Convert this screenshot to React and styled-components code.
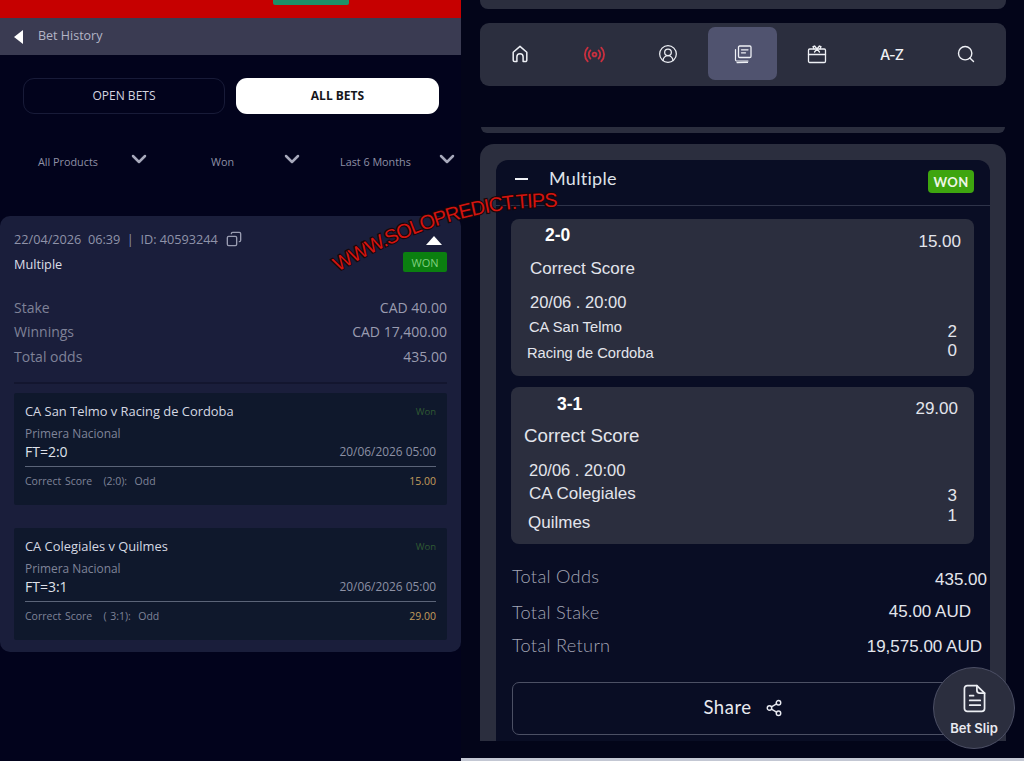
import React from "react";
import styled, { createGlobalStyle } from "styled-components";
import { ChevronDown, Copy, Radio, CircleUserRound, Search, Share2 } from "lucide-react";

const Global = createGlobalStyle`
  html, body { margin: 0; padding: 0; background: #02031a; }
  * { box-sizing: border-box; }
`;

const Page = styled.div`
  position: relative;
  width: 1024px;
  height: 761px;
  overflow: hidden;
  display: flex;
  background: #030519;
`;

/* ---------- left pane ---------- */
const LeftPane = styled.section`
  width: 461px;
  flex: none;
  height: 100%;
  background: #02031c;
  font-family: "Open Sans", sans-serif;
`;
const RedBar = styled.div`
  height: 18px;
  background: #c60000;
  display: flex;
  align-items: flex-start;
  padding-left: 273px;
`;
const GreenTab = styled.div`
  width: 76px;
  height: 5px;
  background: #1d9068;
  border-radius: 0 0 2px 2px;
`;
const HistoryBar = styled.header`
  height: 37px;
  background: #3a3b52;
  display: flex;
  align-items: center;
  gap: 15px;
  padding: 0 0 2px 14px;
  color: #b3b5c6;
  font-size: 12.5px;
`;
const BackArrow = styled.span`
  width: 0;
  height: 0;
  border-style: solid;
  border-width: 7px 9px 7px 0;
  border-color: transparent #ffffff transparent transparent;
  margin-top: 2px;
`;
const Tabs = styled.div`
  display: flex;
  gap: 11px;
  padding: 23px 0 0 23px;
`;
const Tab = styled.div`
  height: 36px;
  width: ${(p) => (p.$active ? 203 : 202)}px;
  border-radius: 11px;
  display: flex;
  align-items: center;
  justify-content: center;
  padding-bottom: 2px;
  font-size: 12px;
  font-weight: ${(p) => (p.$active ? 700 : 400)};
  color: ${(p) => (p.$active ? "#16161c" : "#d5d6e0")};
  background: ${(p) => (p.$active ? "#ffffff" : "transparent")};
  border: ${(p) => (p.$active ? "none" : "1px solid #181b38")};
`;
const Filters = styled.div`
  display: flex;
  padding: 37px 0 0 38px;
  height: 102px;
`;
const Filter = styled.div`
  width: ${(p) => p.$w}px;
  flex: none;
  height: 20px;
  display: flex;
  align-items: center;
  justify-content: space-between;
  font-size: 10.8px;
  color: #8e90a5;
  padding-left: ${(p) => p.$indent || 0}px;
`;
const FilterChevron = styled(ChevronDown)`
  width: 24px;
  height: 24px;
  color: #a7a9bb;
  stroke-width: 2.5;
  margin: -4px -2px 0 0;
`;
const BetCard = styled.article`
  height: 436px;
  background: #1a1e3b;
  border-radius: 10px;
  padding: 13px 14px 0;
`;
const CardTop = styled.div`
  display: flex;
  justify-content: space-between;
  align-items: flex-start;
  height: 66px;
`;
const MetaColumn = styled.div`
  display: flex;
  flex-direction: column;
`;
const MetaLine = styled.div`
  display: flex;
  align-items: center;
  gap: 8px;
  height: 20px;
  font-size: 12.7px;
  color: #8f93a9;
`;
const CopyIcon = styled(Copy)`
  width: 16px;
  height: 16px;
  color: #9a9db2;
  transform: scaleX(-1);
`;
const TypeLabel = styled.div`
  margin-top: 5px;
  height: 20px;
  line-height: 20px;
  font-size: 12.7px;
  color: #dcdde6;
`;
const StatusColumn = styled.div`
  display: flex;
  flex-direction: column;
  align-items: flex-end;
  padding-top: 7px;
`;
const UpArrow = styled.span`
  width: 0;
  height: 0;
  border-style: solid;
  border-width: 0 8px 9px 8px;
  border-color: transparent transparent #ffffff transparent;
  margin: 0 5px 7px 0;
`;
const WonTag = styled.span`
  width: 44px;
  height: 20px;
  background: #0b7f10;
  border-radius: 2px;
  display: flex;
  align-items: center;
  justify-content: center;
  font-size: 11px;
  color: #7fcf7f;
`;
const StatRow = styled.div`
  height: 24.5px;
  display: flex;
  align-items: center;
  justify-content: space-between;
  font-size: 14px;
  color: #7f8298;
`;
const StatValue = styled.span`
  color: #9a9cb0;
`;
const Divider = styled.div`
  height: 2px;
  background: #13162f;
  margin: 13px 0 9px;
`;
const Leg = styled.div`
  height: 112px;
  background: #0f182c;
  padding: 10px 11px 0;
  margin-bottom: ${(p) => p.$gap || 0}px;
  border-radius: 2px;
`;
const LegTitleRow = styled.div`
  display: flex;
  justify-content: space-between;
  align-items: center;
  height: 17px;
  font-size: 12.9px;
  color: #d5d8e3;
`;
const WonText = styled.span`
  font-size: 9.5px;
  color: #2f5a33;
`;
const League = styled.div`
  margin-top: 6px;
  height: 15px;
  line-height: 15px;
  font-size: 11.9px;
  color: #7f8499;
`;
const ScoreRow = styled.div`
  display: flex;
  justify-content: space-between;
  align-items: center;
  height: 21px;
  font-size: 14px;
  color: #dfe1ea;
`;
const LegDate = styled.span`
  font-size: 11.9px;
  color: #8d91a5;
`;
const LegRule = styled.div`
  height: 1px;
  background: #5b6478;
  margin-top: 4px;
`;
const MarketRow = styled.div`
  display: flex;
  justify-content: space-between;
  align-items: center;
  height: 28px;
  font-size: 10.5px;
  color: #7f8499;
  word-spacing: 1px;
`;
const MarketName = styled.span`
  white-space: pre;
`;
const Odds = styled.span`
  color: #c39d5c;
`;

/* ---------- right pane ---------- */
const RightPane = styled.section`
  flex: 1;
  height: 100%;
  padding: 0 18px 0 19px;
  display: flex;
  flex-direction: column;
  font-family: "Lato", sans-serif;
  border-bottom: 3px solid #c3c7d3;
`;
const TopSliver = styled.div`
  height: 9px;
  flex: none;
  background: #2b2e3e;
  border-radius: 0 0 8px 8px;
`;
const Nav = styled.nav`
  flex: none;
  margin-top: 14px;
  height: 63px;
  background: #2b2e3e;
  border-radius: 9px;
  display: grid;
  grid-template-columns: repeat(7, 74.4px);
  padding: 4px 0 6px 2.5px;
`;
const NavItem = styled.div`
  display: flex;
  align-items: center;
  justify-content: center;
  color: ${(p) => (p.$live ? "#c9303f" : "#eef0f5")};
  font-family: "Inter", sans-serif;
  font-size: 14.5px;
  font-weight: 500;
  letter-spacing: -0.9px;
  border-radius: 7px;
  background: ${(p) => (p.$active ? "#50536f" : "transparent")};
  margin: ${(p) => (p.$active ? "0 2.6px" : "0")};
  padding-top: 1px;
`;
const Sliver = styled.div`
  flex: none;
  height: 6px;
  margin: 41px 1px 0;
  background: #2b2e3e;
  border-radius: 0 0 6px 6px;
`;
const SlipCard = styled.div`
  flex: none;
  margin-top: 11px;
  height: 597px;
  background: #2b2e3e;
  border-radius: 14px 14px 0 0;
  padding: 16px 16px 0;
`;
const SlipInner = styled.div`
  height: 581px;
  background: #090d24;
  border-radius: 12px 12px 0 0;
`;
const SlipHeader = styled.div`
  height: 46px;
  border-bottom: 1px solid #2e3349;
  display: flex;
  align-items: center;
  padding: 0 16px 10px 19px;
  color: #dfe1e9;
  font-size: 18px;
  font-weight: 400;
  letter-spacing: 0.3px;
`;
const Minus = styled.span`
  width: 13px;
  height: 2px;
  background: #eef0f5;
  margin: 2px 21px 0 0;
`;
const WonBadge = styled.span`
  margin-left: auto;
  margin-top: 8px;
  width: 46px;
  height: 23px;
  background: #3ea50f;
  border-radius: 4px;
  display: flex;
  align-items: center;
  justify-content: center;
  font-size: 13px;
  font-weight: 700;
  letter-spacing: 0.4px;
  color: #eef7e6;
`;
const Selection = styled.div`
  margin: ${(p) => p.$top}px 16px 0 15px;
  height: 157px;
  background: #2b2e3e;
  border-radius: 8px;
  display: grid;
  grid-template-columns: 1fr auto;
  font-family: "Liberation Sans", sans-serif;
  color: #e3e5ec;
`;
const SelectionColumn = styled.div`
  display: flex;
  flex-direction: column;
  align-items: ${(p) => (p.$end ? "flex-end" : "flex-start")};
`;
const Line = styled.div`
  height: ${(p) => p.$h}px;
  flex: none;
  margin-top: ${(p) => p.$mt || 0}px;
  display: flex;
  align-items: center;
  padding-left: ${(p) => p.$x || 0}px;
  padding-right: ${(p) => p.$r || 0}px;
  font-size: ${(p) => p.$size}px;
  font-weight: ${(p) => (p.$bold ? 700 : 400)};
  color: ${(p) => (p.$bold ? "#fff" : "inherit")};
`;
const Totals = styled.div`
  margin-top: 14px;
  padding-left: 16px;
`;
const TotalRow = styled.div`
  height: ${(p) => p.$h}px;
  display: flex;
  align-items: center;
  justify-content: space-between;
  padding-right: ${(p) => p.$r}px;
  font-size: 18.2px;
  font-weight: 300;
  letter-spacing: 0.3px;
  color: #a3a5b5;
`;
const TotalValue = styled.span`
  font-family: "Liberation Sans", sans-serif;
  font-weight: 400;
  font-size: 17px;
  letter-spacing: 0;
  color: #e3e5ec;
  padding-top: ${(p) => p.$dy || 0}px;
`;
const ShareButton = styled.div`
  margin: 22px 0 0 16px;
  width: 462px;
  height: 53px;
  border: 1px solid #4c5064;
  border-radius: 7px;
  display: flex;
  align-items: center;
  justify-content: center;
  gap: 13px;
  padding-bottom: 4px;
  color: #e8e9f0;
  font-size: 18.5px;
  letter-spacing: 0.5px;
  & > svg { width: 18px; height: 18px; margin-top: 3px; }
`;
const BetSlipFab = styled.div`
  position: absolute;
  left: 933px;
  top: 667px;
  width: 82px;
  height: 82px;
  border-radius: 50%;
  background: #2b2e3e;
  border: 1px solid #4c4f65;
  display: flex;
  flex-direction: column;
  align-items: center;
  justify-content: center;
  gap: 7px;
  padding-top: 3px;
  font-family: "Inter", sans-serif;
  font-size: 13px;
  font-weight: 600;
  color: #e9eaf0;
`;
const WatermarkLayer = styled.svg`
  position: absolute;
  left: 0;
  top: 0;
  width: 1024px;
  height: 761px;
  pointer-events: none;
`;
const WatermarkText = styled.text`
  font-family: "Liberation Sans", sans-serif;
  font-size: 20px;
  fill: #d3140f;
  stroke: #17060a;
  stroke-width: 2.2px;
  paint-order: stroke;
`;

const HomeIcon = () => (
  <svg width="18" height="18" viewBox="0 0 18 18" fill="none" stroke="currentColor" strokeWidth="1.5" strokeLinejoin="round">
    <path d="M2.2 7.2 9 1.4l6.8 5.8v8a1.4 1.4 0 0 1-1.4 1.4h-2.3v-4.8a3.1 3.1 0 0 0-6.2 0v4.8H3.6a1.4 1.4 0 0 1-1.4-1.4Z" />
  </svg>
);
const BetsIcon = () => (
  <svg width="20" height="20" viewBox="0 0 20 20" fill="none" stroke="currentColor" strokeWidth="1.3" strokeLinecap="round" strokeLinejoin="round">
    <rect x="5.5" y="2" width="12.5" height="11.5" rx="1.2" />
    <path d="M8.5 5.8h6.5M8.5 8.8h4" />
    <path d="M2.5 5.5v10.2a1.3 1.3 0 0 0 1.3 1.3H15M4 18.6l10.5-.2" strokeWidth="1.2" />
  </svg>
);
const GiftIcon = () => (
  <svg width="20" height="20" viewBox="0 0 20 20" fill="none" stroke="currentColor" strokeWidth="1.3" strokeLinejoin="round" strokeLinecap="round">
    <rect x="1.5" y="5" width="17" height="13.5" rx="1.2" />
    <path d="M1.5 10.5h17" />
    <path d="M10 5 7.6 2 6 2.6 7 5M10 5l2.4-3 1.6.6L13 5M10 5 7.5 8M10 5l2.5 3" />
  </svg>
);
const SlipIcon = () => (
  <svg width="23" height="29" viewBox="0 0 24 30" fill="none" stroke="#eceef3" strokeWidth="1.8" strokeLinecap="round" strokeLinejoin="round">
    <path d="M4.5 1.5h10l8 8v16a3 3 0 0 1-3 3h-15a3 3 0 0 1-3-3v-21a3 3 0 0 1 3-3Z" />
    <path d="M14.5 1.5v5a3 3 0 0 0 3 3h5M7 12h4M7 17h11M7 22h11" />
  </svg>
);

const legs = [
  { title: "CA San Telmo v Racing de Cordoba", ft: "FT=2:0", market: "Correct Score   (2:0):  Odd", odd: "15.00", gap: 23 },
  { title: "CA Colegiales v Quilmes", ft: "FT=3:1", market: "Correct Score   ( 3:1):  Odd", odd: "29.00", gap: 0 },
];

export default function App() {
  return (
    <Page>
      <Global />
      <LeftPane>
        <RedBar><GreenTab /></RedBar>
        <HistoryBar><BackArrow />Bet History</HistoryBar>
        <Tabs>
          <Tab>OPEN BETS</Tab>
          <Tab $active>ALL BETS</Tab>
        </Tabs>
        <Filters>
          <Filter $w={111}>All Products<FilterChevron /></Filter>
          <Filter $w={153} $indent={62}>Won<FilterChevron /></Filter>
          <Filter $w={155} $indent={38}>Last 6 Months<FilterChevron /></Filter>
        </Filters>
        <BetCard>
          <CardTop>
            <MetaColumn>
              <MetaLine>22/04/2026&nbsp; 06:39 &nbsp;|&nbsp; ID: 40593244 <CopyIcon /></MetaLine>
              <TypeLabel>Multiple</TypeLabel>
            </MetaColumn>
            <StatusColumn>
              <UpArrow />
              <WonTag>WON</WonTag>
            </StatusColumn>
          </CardTop>
          <StatRow><span>Stake</span><StatValue>CAD 40.00</StatValue></StatRow>
          <StatRow><span>Winnings</span><StatValue>CAD 17,400.00</StatValue></StatRow>
          <StatRow><span>Total odds</span><StatValue>435.00</StatValue></StatRow>
          <Divider />
          {legs.map((l) => (
            <Leg key={l.ft} $gap={l.gap}>
              <LegTitleRow><span>{l.title}</span><WonText>Won</WonText></LegTitleRow>
              <League>Primera Nacional</League>
              <ScoreRow><span>{l.ft}</span><LegDate>20/06/2026 05:00</LegDate></ScoreRow>
              <LegRule />
              <MarketRow><MarketName>{l.market}</MarketName><Odds>{l.odd}</Odds></MarketRow>
            </Leg>
          ))}
        </BetCard>
      </LeftPane>

      <RightPane>
        <TopSliver />
        <Nav>
          <NavItem><HomeIcon /></NavItem>
          <NavItem $live><Radio size={23} strokeWidth={1.9} /></NavItem>
          <NavItem><CircleUserRound size={20} strokeWidth={1.5} /></NavItem>
          <NavItem $active><BetsIcon /></NavItem>
          <NavItem><GiftIcon /></NavItem>
          <NavItem>A-Z</NavItem>
          <NavItem><Search size={20} strokeWidth={1.7} /></NavItem>
        </Nav>
        <Sliver />
        <SlipCard>
          <SlipInner>
            <SlipHeader>
              <Minus />Multiple
              <WonBadge>WON</WonBadge>
            </SlipHeader>
            <Selection $top={13}>
              <SelectionColumn>
                <Line $h={33} $x={34} $size={17.5} $bold>2-0</Line>
                <Line $h={34} $x={19} $size={17}>Correct Score</Line>
                <Line $h={33} $x={19} $size={16.5}>20/06 . 20:00</Line>
                <Line $h={16} $x={18} $size={14.7}>CA San Telmo</Line>
                <Line $h={36} $x={16} $size={14.7}>Racing de Cordoba</Line>
              </SelectionColumn>
              <SelectionColumn $end>
                <Line $h={45} $r={13} $size={17}>15.00</Line>
                <Line $h={18} $mt={59} $r={17} $size={17}>2</Line>
                <Line $h={20} $r={17} $size={17}>0</Line>
              </SelectionColumn>
            </Selection>
            <Selection $top={11}>
              <SelectionColumn>
                <Line $h={34} $x={46} $size={17.5} $bold>3-1</Line>
                <Line $h={30} $x={13} $size={18.7}>Correct Score</Line>
                <Line $h={32} $mt={3} $x={18} $size={16.5}>20/06 . 20:00</Line>
                <Line $h={16} $x={18} $size={17}>CA Colegiales</Line>
                <Line $h={20} $mt={11} $x={17} $size={17}>Quilmes</Line>
              </SelectionColumn>
              <SelectionColumn $end>
                <Line $h={43} $r={16} $size={17}>29.00</Line>
                <Line $h={20} $mt={56} $r={17} $size={17}>3</Line>
                <Line $h={20} $r={17} $size={17}>1</Line>
              </SelectionColumn>
            </Selection>
            <Totals>
              <TotalRow $h={36} $r={3}>Total Odds<TotalValue $dy={8}>435.00</TotalValue></TotalRow>
              <TotalRow $h={36} $r={19}>Total Stake<TotalValue>45.00 AUD</TotalValue></TotalRow>
              <TotalRow $h={30} $r={8}>Total Return<TotalValue $dy={4}>19,575.00 AUD</TotalValue></TotalRow>
            </Totals>
            <ShareButton>Share<Share2 strokeWidth={1.9} /></ShareButton>
          </SlipInner>
        </SlipCard>
      </RightPane>

      <BetSlipFab><SlipIcon />Bet Slip</BetSlipFab>
      <WatermarkLayer viewBox="0 0 1024 761">
        <defs>
          <path id="wm-curve" d="M338 272 Q450 205 557 207" />
        </defs>
        <WatermarkText>
          <textPath href="#wm-curve" textLength="232" lengthAdjust="spacing">WWW.SOLOPREDICT.TIPS</textPath>
        </WatermarkText>
      </WatermarkLayer>
    </Page>
  );
}
